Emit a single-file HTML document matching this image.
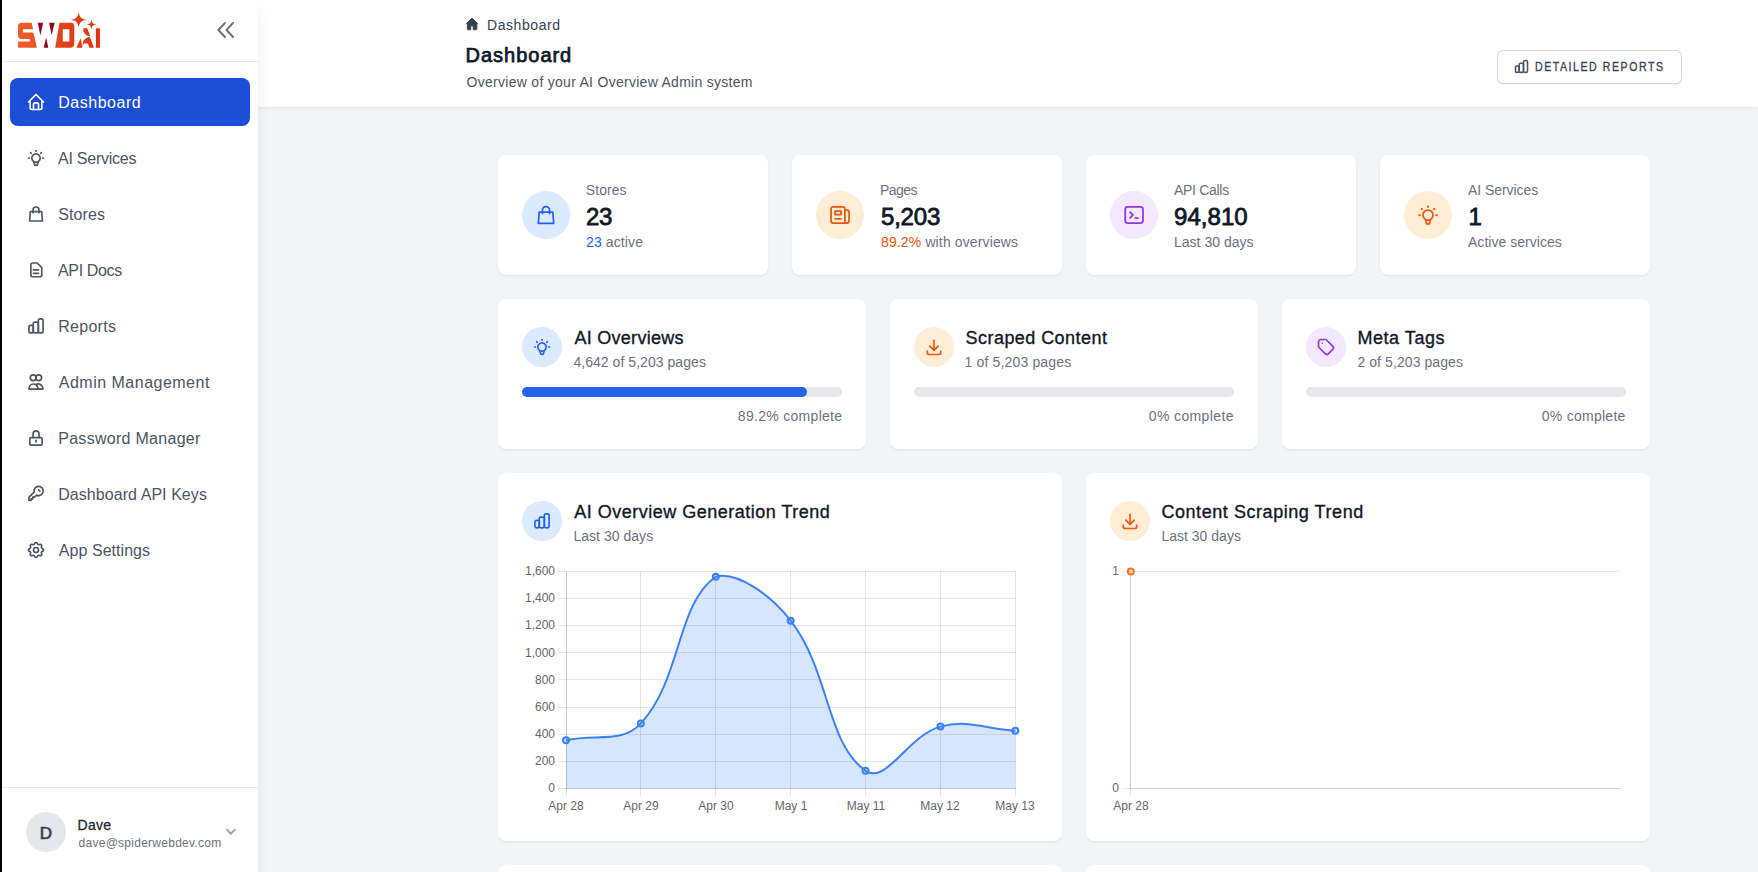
<!DOCTYPE html><html><head><meta charset="utf-8"><style>
*{box-sizing:border-box;margin:0;padding:0}
html,body{width:1758px;height:872px;overflow:hidden;background:#f3f4f6;font-family:"Liberation Sans",sans-serif}
.a{position:absolute;display:block}
.t{position:absolute;line-height:1;white-space:nowrap}
.card{position:absolute;background:#fff;border-radius:8px;box-shadow:0 1px 2px 0 rgba(0,0,0,.08)}
.circ{position:absolute;border-radius:50%}
</style></head><body>
<div class="a" style="left:258px;top:0;width:1500px;height:107px;background:#fff;box-shadow:0 1px 2px 0 rgba(0,0,0,.08)"></div>
<svg class="a" style="left:462px;top:14px;" width="20" height="20" viewBox="0 0 20 20" fill="none"><path d="M10 4.1L4.2 9.6H5.3V14.8Q5.3 15.8 6.3 15.8H8.8V11.9H11.2V15.8H13.9Q14.9 15.8 14.9 14.8V9.6H15.8Z" fill="#374151" stroke="#374151" stroke-width="0.8" stroke-linejoin="round"/></svg>
<div class="t" style="left:487px;top:18px;font-size:14px;color:#374151;letter-spacing:0.57px;">Dashboard</div>
<div class="t" style="left:465.6px;top:45px;font-size:20px;color:#111827;letter-spacing:0.975px;-webkit-text-stroke:0.75px #111827;">Dashboard</div>
<div class="t" style="left:466.6px;top:75px;font-size:14px;color:#4b5563;letter-spacing:0.28px;">Overview of your AI Overview Admin system</div>
<div class="a" style="left:1497px;top:50px;width:185px;height:34px;border:1px solid #d1d5db;border-radius:6px;background:#fff;box-shadow:0 1px 2px rgba(0,0,0,.05)"></div>
<svg class="a" style="left:1513px;top:58px" width="17" height="17" viewBox="0 0 24 24" fill="none"><g stroke="#4b5563" stroke-width="2.2" stroke-linecap="round" stroke-linejoin="round"><rect x="3.5" y="11.2" width="5.2" height="9.1" rx="2"/><rect x="8.7" y="7.3" width="6.1" height="13" rx="2"/><rect x="14.8" y="3.4" width="5.7" height="16.9" rx="2"/></g></svg>
<div class="t" style="left:1535.0px;top:61px;font-size:12px;color:#374151;letter-spacing:1.767px;-webkit-text-stroke:0.3px #374151;transform:scaleX(0.88);transform-origin:0 0;">DETAILED REPORTS</div>
<div class="a" style="left:0;top:0;width:258px;height:872px;background:#fff;box-shadow:0 10px 15px -3px rgba(0,0,0,.1),0 4px 6px -4px rgba(0,0,0,.1)"></div>
<div class="a" style="left:0;top:0;width:2px;height:872px;background:#000"></div>
<div class="a" style="left:2px;top:61px;width:256px;height:1px;background:#e5e7eb"></div>
<div class="a" style="left:2px;top:787px;width:256px;height:1px;background:#e5e7eb"></div>
<svg class="a" style="left:12px;top:8px;" width="96" height="44" viewBox="0 0 1758 806" fill="none">
<defs><linearGradient id="lg" gradientUnits="userSpaceOnUse" x1="110" y1="0" x2="1610" y2="0"><stop offset="0" stop-color="#f25d2b"/><stop offset="0.5" stop-color="#e2441a"/><stop offset="1" stop-color="#d9360f"/></linearGradient></defs>
<g fill="url(#lg)">
<path d="M170 270H360L385 390H200V450H370Q400 455 405 500L455 730H110V615H330L322 570H170Q110 565 110 510V330Q115 275 170 270Z"/>
<path d="M870 270H1080Q1140 275 1140 340V660Q1135 725 1070 730H790Z M930 390V615H1050V390Z" fill-rule="evenodd"/>
<path d="M1312 372H1378L1432 510Q1395 522 1360 495Q1300 450 1305 395Q1306 372 1312 372Z"/>
<path d="M1297 641Q1320 540 1423 527L1503 729H1415L1390 650H1314L1290 729Z"/>
<path d="M1255 557Q1275 600 1285 729H1179Z"/>
<path d="M1536 372H1611V729H1536Z"/>
<path d="M1221 74C1238.2 174.1 1263.9 199.8 1364.0 217.0C1263.9 234.2 1238.2 259.9 1221.0 360.0C1203.8 259.9 1178.1 234.2 1078.0 217.0C1178.1 199.8 1203.8 174.1 1221.0 74.0Z"/>
<path d="M1457 215C1467.3 275.2 1482.8 290.7 1543.0 301.0C1482.8 311.3 1467.3 326.8 1457.0 387.0C1446.7 326.8 1431.2 311.3 1371.0 301.0C1431.2 290.7 1446.7 275.2 1457.0 215.0Z"/>
</g>
<g fill="#8b0a1e">
<path d="M470 270H570L520 500Z"/>
<path d="M680 270H780L725 500Z"/>
<path d="M625 540L665 730H580Z"/>
</g></svg>
<svg class="a" style="left:210px;top:15px;" width="32" height="30" viewBox="0 0 32 30" fill="none"><g stroke="#6b7280" stroke-width="2" stroke-linecap="round" stroke-linejoin="round" fill="none"><path d="M15 7.9L8.4 15L15 22M23.1 7.9L16.5 15L23.1 22"/></g></svg>
<div class="a" style="left:10px;top:78px;width:240px;height:48px;background:#1d4ed8;border-radius:8px"></div>
<svg class="a" style="left:26px;top:92px" width="20" height="20" viewBox="0 0 24 24" fill="none"><g stroke="#ffffff" stroke-width="2" stroke-linecap="round" stroke-linejoin="round"><path d="M5 12l-2 0l9 -9l9 9l-2 0"/><path d="M5 12v7a2 2 0 0 0 2 2h10a2 2 0 0 0 2 -2v-7"/><path d="M9 21v-6a2 2 0 0 1 2 -2h2a2 2 0 0 1 2 2v6"/></g></svg>
<div class="t" style="left:58.2px;top:95px;font-size:16px;color:#ffffff;letter-spacing:0.525px;">Dashboard</div>
<svg class="a" style="left:26px;top:148px" width="20" height="20" viewBox="0 0 24 24" fill="none"><g stroke="#4b5563" stroke-width="2" stroke-linecap="round" stroke-linejoin="round"><path d="M3 12h1m8 -9v1m8 8h1m-15.4 -6.4l.7 .7m12.1 -.7l-.7 .7"/><path d="M9 16a5 5 0 1 1 6 0a3.5 3.5 0 0 0 -1 3a2 2 0 0 1 -4 0a3.5 3.5 0 0 0 -1 -3"/><path d="M9.7 17l4.6 0"/></g></svg>
<div class="t" style="left:58px;top:151px;font-size:16px;color:#4b5563;letter-spacing:-0.25px;">AI Services</div>
<svg class="a" style="left:26px;top:204px" width="20" height="20" viewBox="0 0 24 24" fill="none"><g stroke="#4b5563" stroke-width="2" stroke-linecap="round" stroke-linejoin="round"><path d="M5.2 9.2H18.8L19.7 20.4H4.3Z"/><path d="M8.4 10.6V7.2A3.6 3.6 0 0 1 15.6 7.2V10.6"/></g></svg>
<div class="t" style="left:58.2px;top:207px;font-size:16px;color:#4b5563;letter-spacing:0.09px;">Stores</div>
<svg class="a" style="left:26px;top:260px" width="20" height="20" viewBox="0 0 24 24" fill="none"><g stroke="#4b5563" stroke-width="2" stroke-linecap="round" stroke-linejoin="round"><path d="M7.8 3.64H13.4L18.9 9.1V18.1A2 2 0 0 1 16.9 20.1H7.8A2 2 0 0 1 5.8 18.1V5.64A2 2 0 0 1 7.8 3.64Z"/><path d="M8.9 11.9H15.1M8.9 16H15.1"/></g></svg>
<div class="t" style="left:58px;top:263px;font-size:16px;color:#4b5563;letter-spacing:-0.35px;">API Docs</div>
<svg class="a" style="left:26px;top:316px" width="20" height="20" viewBox="0 0 24 24" fill="none"><g stroke="#4b5563" stroke-width="2" stroke-linecap="round" stroke-linejoin="round"><rect x="3.5" y="11.2" width="5.2" height="9.1" rx="2"/><rect x="8.7" y="7.3" width="6.1" height="13" rx="2"/><rect x="14.8" y="3.4" width="5.7" height="16.9" rx="2"/></g></svg>
<div class="t" style="left:58.2px;top:319px;font-size:16px;color:#4b5563;letter-spacing:0.283px;">Reports</div>
<svg class="a" style="left:26px;top:372px" width="20" height="20" viewBox="0 0 24 24" fill="none"><g stroke="#4b5563" stroke-width="2" stroke-linecap="round" stroke-linejoin="round"><circle cx="8.6" cy="6.9" r="3.5"/><circle cx="15.2" cy="6.9" r="3.5"/><path d="M3.5 20.5A5.5 6.1 0 0 1 14.5 20.5Z"/><path d="M12.9 14.6A6 6.1 0 0 1 20.5 20.5H14.5"/></g></svg>
<div class="t" style="left:58.8px;top:375px;font-size:16px;color:#4b5563;letter-spacing:0.49px;">Admin Management</div>
<svg class="a" style="left:26px;top:428px" width="20" height="20" viewBox="0 0 24 24" fill="none"><g stroke="#4b5563" stroke-width="2" stroke-linecap="round" stroke-linejoin="round"><rect x="4.5" y="11.5" width="14.9" height="9.1" rx="1.8"/><path d="M8.46 11.5V7A3.6 3.6 0 0 1 15.66 7V11.5"/><path d="M11.9 14.9V16.7"/></g></svg>
<div class="t" style="left:58.2px;top:431px;font-size:16px;color:#4b5563;letter-spacing:0.29px;">Password Manager</div>
<svg class="a" style="left:26px;top:484px" width="20" height="20" viewBox="0 0 24 24" fill="none"><g stroke="#4b5563" stroke-width="2" stroke-linecap="round" stroke-linejoin="round"><path d="M9.79 9.83L3.48 16.14V19.56H6.24V17.76H8.16V15.84H10.08L12.79 13.4A5.52 5.52 0 1 0 9.79 9.83Z"/><path d="M15.1 7.1L16.8 8.7"/></g></svg>
<div class="t" style="left:58.2px;top:487px;font-size:16px;color:#4b5563;letter-spacing:0.062px;">Dashboard API Keys</div>
<svg class="a" style="left:26px;top:540px" width="20" height="20" viewBox="0 0 24 24" fill="none"><g stroke="#4b5563" stroke-width="2" stroke-linecap="round" stroke-linejoin="round"><path d="M10.325 4.317c.426 -1.756 2.924 -1.756 3.35 0a1.724 1.724 0 0 0 2.573 1.066c1.543 -.94 3.31 .826 2.37 2.37a1.724 1.724 0 0 0 1.065 2.572c1.756 .426 1.756 2.924 0 3.35a1.724 1.724 0 0 0 -1.066 2.573c.94 1.543 -.826 3.31 -2.37 2.37a1.724 1.724 0 0 0 -2.572 1.065c-.426 1.756 -2.924 1.756 -3.35 0a1.724 1.724 0 0 0 -2.573 -1.066c-1.543 .94 -3.31 -.826 -2.37 -2.37a1.724 1.724 0 0 0 -1.065 -2.572c-1.756 -.426 -1.756 -2.924 0 -3.35a1.724 1.724 0 0 0 1.066 -2.573c-.94 -1.543 .826 -3.31 2.37 -2.37c1 .608 2.296 .07 2.572 -1.065z"/><path d="M9 12a3 3 0 1 0 6 0a3 3 0 0 0 -6 0"/></g></svg>
<div class="t" style="left:58.8px;top:543px;font-size:16px;color:#4b5563;letter-spacing:0.05px;">App Settings</div>
<div class="circ" style="left:26px;top:812px;width:40px;height:40px;background:#e5e7eb"></div>
<div class="t" style="left:-154px;width:400px;top:825px;font-size:17px;color:#374151;text-align:center;-webkit-text-stroke:0.7px #374151;">D</div>
<div class="t" style="left:77.6px;top:818px;font-size:14px;color:#1f2937;letter-spacing:0.267px;-webkit-text-stroke:0.3px #1f2937;">Dave</div>
<div class="t" style="left:78.6px;top:837px;font-size:12px;color:#6b7280;letter-spacing:0.26px;">dave@spiderwebdev.com</div>
<svg class="a" style="left:218px;top:820px;" width="26" height="25" viewBox="0 0 26 25" fill="none"><path d="M8.9 9.7L12.9 13.75L17 9.7" stroke="#9ca3af" stroke-width="1.8" stroke-linecap="round" stroke-linejoin="round" fill="none"/></svg>
<div class="card" style="left:498px;top:155px;width:270px;height:120px"></div>
<div class="circ" style="left:522px;top:191px;width:48px;height:48px;background:#dbeafe"></div>
<svg class="a" style="left:534px;top:203px" width="24" height="24" viewBox="0 0 24 24" fill="none"><g stroke="#2563eb" stroke-width="1.75" stroke-linecap="round" stroke-linejoin="round"><path d="M5.2 9.2H18.8L19.7 20.4H4.3Z"/><path d="M8.4 10.6V7.2A3.6 3.6 0 0 1 15.6 7.2V10.6"/></g></svg>
<div class="t" style="left:585.8px;top:183px;font-size:14px;color:#6b7280;letter-spacing:0.07px;">Stores</div>
<div class="t" style="left:586px;top:205px;font-size:24px;color:#111827;letter-spacing:-0.3px;-webkit-text-stroke:0.8px #111827;">23</div>
<div class="t" style="left:586px;top:235px;font-size:14px;color:#6b7280;letter-spacing:0.12px;"><span style="color:#2563eb">23</span> active</div>
<div class="card" style="left:792px;top:155px;width:270px;height:120px"></div>
<div class="circ" style="left:816px;top:191px;width:48px;height:48px;background:#ffedd5"></div>
<svg class="a" style="left:828px;top:203px" width="24" height="24" viewBox="0 0 24 24" fill="none"><g stroke="#ea580c" stroke-width="1.75" stroke-linecap="round" stroke-linejoin="round"><path d="M5.1 3.8H14.9A2 2 0 0 1 16.9 5.8V20H5.1A2 2 0 0 1 3.1 18V5.8A2 2 0 0 1 5.1 3.8Z"/><path d="M16.9 7H19A2 2 0 0 1 21 9V18A2 2 0 0 1 19 20H16.9"/><rect x="7" y="8.2" width="6" height="3.3"/><path d="M7.1 15.8H13"/></g></svg>
<div class="t" style="left:880.0px;top:183px;font-size:14px;color:#6b7280;letter-spacing:-0.55px;">Pages</div>
<div class="t" style="left:881.0px;top:205px;font-size:24px;color:#111827;letter-spacing:-0.2px;-webkit-text-stroke:0.8px #111827;">5,203</div>
<div class="t" style="left:881.0px;top:235px;font-size:14px;color:#6b7280;letter-spacing:0.131px;"><span style="color:#ea580c">89.2%</span> with overviews</div>
<div class="card" style="left:1086px;top:155px;width:270px;height:120px"></div>
<div class="circ" style="left:1110px;top:191px;width:48px;height:48px;background:#f3e8ff"></div>
<svg class="a" style="left:1122px;top:203px" width="24" height="24" viewBox="0 0 24 24" fill="none"><g stroke="#9333ea" stroke-width="1.75" stroke-linecap="round" stroke-linejoin="round"><rect x="3.2" y="3.8" width="17.8" height="16.2" rx="2.5"/><path d="M8.1 9.1L10.9 11.95L8.1 14.8"/><path d="M13.4 15H16"/></g></svg>
<div class="t" style="left:1174px;top:183px;font-size:14px;color:#6b7280;letter-spacing:-0.3px;">API Calls</div>
<div class="t" style="left:1174.0px;top:205px;font-size:24px;color:#111827;letter-spacing:0.06px;-webkit-text-stroke:0.8px #111827;">94,810</div>
<div class="t" style="left:1174.0px;top:235px;font-size:14px;color:#6b7280;letter-spacing:0.011px;">Last 30 days</div>
<div class="card" style="left:1380px;top:155px;width:270px;height:120px"></div>
<div class="circ" style="left:1404px;top:191px;width:48px;height:48px;background:#ffedd5"></div>
<svg class="a" style="left:1416px;top:203px" width="24" height="24" viewBox="0 0 24 24" fill="none"><g stroke="#ea580c" stroke-width="1.75" stroke-linecap="round" stroke-linejoin="round"><path d="M3 12h1m8 -9v1m8 8h1m-15.4 -6.4l.7 .7m12.1 -.7l-.7 .7"/><path d="M9 16a5 5 0 1 1 6 0a3.5 3.5 0 0 0 -1 3a2 2 0 0 1 -4 0a3.5 3.5 0 0 0 -1 -3"/><path d="M9.7 17l4.6 0"/></g></svg>
<div class="t" style="left:1468px;top:183px;font-size:14px;color:#6b7280;letter-spacing:-0.05px;">AI Services</div>
<div class="t" style="left:1468.6px;top:205px;font-size:24px;color:#111827;-webkit-text-stroke:0.8px #111827;">1</div>
<div class="t" style="left:1468px;top:235px;font-size:14px;color:#6b7280;letter-spacing:0.034px;">Active services</div>
<div class="card" style="left:498px;top:299px;width:368px;height:150px"></div>
<div class="circ" style="left:522px;top:327px;width:40px;height:40px;background:#dbeafe"></div>
<svg class="a" style="left:532px;top:337px" width="20" height="20" viewBox="0 0 24 24" fill="none"><g stroke="#2563eb" stroke-width="2" stroke-linecap="round" stroke-linejoin="round"><path d="M3 12h1m8 -9v1m8 8h1m-15.4 -6.4l.7 .7m12.1 -.7l-.7 .7"/><path d="M9 16a5 5 0 1 1 6 0a3.5 3.5 0 0 0 -1 3a2 2 0 0 1 -4 0a3.5 3.5 0 0 0 -1 -3"/><path d="M9.7 17l4.6 0"/></g></svg>
<div class="t" style="left:574.4px;top:329px;font-size:18px;color:#111827;letter-spacing:0.282px;-webkit-text-stroke:0.35px #111827;">AI Overviews</div>
<div class="t" style="left:573.4px;top:355px;font-size:14px;color:#6b7280;letter-spacing:0.049px;">4,642 of 5,203 pages</div>
<div class="a" style="left:522px;top:387px;width:320px;height:10px;border-radius:5px;background:#e5e7eb"></div>
<div class="a" style="left:522px;top:387px;width:285.4px;height:10px;border-radius:5px;background:#2563eb"></div>
<div class="t" style="right:915.6px;top:409px;font-size:14px;color:#6b7280;text-align:right;letter-spacing:0.298px;">89.2% complete</div>
<div class="card" style="left:890px;top:299px;width:368px;height:150px"></div>
<div class="circ" style="left:914px;top:327px;width:40px;height:40px;background:#ffedd5"></div>
<svg class="a" style="left:924px;top:337px" width="20" height="20" viewBox="0 0 24 24" fill="none"><g stroke="#ea580c" stroke-width="2" stroke-linecap="round" stroke-linejoin="round"><path d="M4 17v2a2 2 0 0 0 2 2h12a2 2 0 0 0 2 -2v-2"/><path d="M7 11l5 5l5 -5"/><path d="M12 4l0 12"/></g></svg>
<div class="t" style="left:965.6px;top:329px;font-size:18px;color:#111827;letter-spacing:0.443px;-webkit-text-stroke:0.35px #111827;">Scraped Content</div>
<div class="t" style="left:964.6px;top:355px;font-size:14px;color:#6b7280;letter-spacing:0.15px;">1 of 5,203 pages</div>
<div class="a" style="left:914px;top:387px;width:320px;height:10px;border-radius:5px;background:#e5e7eb"></div>
<div class="t" style="right:524.2px;top:409px;font-size:14px;color:#6b7280;text-align:right;letter-spacing:0.37px;">0% complete</div>
<div class="card" style="left:1282px;top:299px;width:368px;height:150px"></div>
<div class="circ" style="left:1306px;top:327px;width:40px;height:40px;background:#f3e8ff"></div>
<svg class="a" style="left:1316px;top:337px" width="20" height="20" viewBox="0 0 24 24" fill="none"><g stroke="#9333ea" stroke-width="2" stroke-linecap="round" stroke-linejoin="round"><path d="M7.5 7.5h.01"/><path d="M3 6v5.172a2 2 0 0 0 .586 1.414l7.71 7.71a2.41 2.41 0 0 0 3.408 0l5.592 -5.592a2.41 2.41 0 0 0 0 -3.408l-7.71 -7.71a2 2 0 0 0 -1.414 -.586h-5.172a3 3 0 0 0 -3 3z"/></g></svg>
<div class="t" style="left:1357.4px;top:329px;font-size:18px;color:#111827;letter-spacing:0.55px;-webkit-text-stroke:0.35px #111827;">Meta Tags</div>
<div class="t" style="left:1357.4px;top:355px;font-size:14px;color:#6b7280;letter-spacing:0.083px;">2 of 5,203 pages</div>
<div class="a" style="left:1306px;top:387px;width:320px;height:10px;border-radius:5px;background:#e5e7eb"></div>
<div class="t" style="right:132.4000000000001px;top:409px;font-size:14px;color:#6b7280;text-align:right;letter-spacing:0.27px;">0% complete</div>
<div class="card" style="left:498px;top:473px;width:564px;height:368px"></div>
<div class="circ" style="left:522px;top:501px;width:40px;height:40px;background:#dbeafe"></div>
<svg class="a" style="left:532px;top:511px" width="20" height="20" viewBox="0 0 24 24" fill="none"><g stroke="#2563eb" stroke-width="2" stroke-linecap="round" stroke-linejoin="round"><rect x="3.5" y="11.2" width="5.2" height="9.1" rx="2"/><rect x="8.7" y="7.3" width="6.1" height="13" rx="2"/><rect x="14.8" y="3.4" width="5.7" height="16.9" rx="2"/></g></svg>
<div class="t" style="left:574.2px;top:503px;font-size:18px;color:#111827;letter-spacing:0.5px;-webkit-text-stroke:0.35px #111827;">AI Overview Generation Trend</div>
<div class="t" style="left:573.4px;top:529px;font-size:14px;color:#6b7280;letter-spacing:0.032px;">Last 30 days</div>
<div class="card" style="left:1086px;top:473px;width:564px;height:368px"></div>
<div class="circ" style="left:1110px;top:501px;width:40px;height:40px;background:#ffedd5"></div>
<svg class="a" style="left:1120px;top:511px" width="20" height="20" viewBox="0 0 24 24" fill="none"><g stroke="#ea580c" stroke-width="2" stroke-linecap="round" stroke-linejoin="round"><path d="M4 17v2a2 2 0 0 0 2 2h12a2 2 0 0 0 2 -2v-2"/><path d="M7 11l5 5l5 -5"/><path d="M12 4l0 12"/></g></svg>
<div class="t" style="left:1161.4px;top:503px;font-size:18px;color:#111827;letter-spacing:0.557px;-webkit-text-stroke:0.35px #111827;">Content Scraping Trend</div>
<div class="t" style="left:1161.4px;top:529px;font-size:14px;color:#6b7280;letter-spacing:0.014px;">Last 30 days</div>
<svg class="a" style="left:0px;top:0px;pointer-events:none" width="1758" height="872" viewBox="0 0 1758 872" fill="none"><line x1="558" y1="571.5" x2="1015.8" y2="571.5" stroke="rgba(0,0,0,0.1)" stroke-width="1"/><line x1="558" y1="598.5" x2="1015.8" y2="598.5" stroke="rgba(0,0,0,0.1)" stroke-width="1"/><line x1="558" y1="625.5" x2="1015.8" y2="625.5" stroke="rgba(0,0,0,0.1)" stroke-width="1"/><line x1="558" y1="652.5" x2="1015.8" y2="652.5" stroke="rgba(0,0,0,0.1)" stroke-width="1"/><line x1="558" y1="679.5" x2="1015.8" y2="679.5" stroke="rgba(0,0,0,0.1)" stroke-width="1"/><line x1="558" y1="707.5" x2="1015.8" y2="707.5" stroke="rgba(0,0,0,0.1)" stroke-width="1"/><line x1="558" y1="734.5" x2="1015.8" y2="734.5" stroke="rgba(0,0,0,0.1)" stroke-width="1"/><line x1="558" y1="761.5" x2="1015.8" y2="761.5" stroke="rgba(0,0,0,0.1)" stroke-width="1"/><line x1="558" y1="788.5" x2="1015.8" y2="788.5" stroke="rgba(0,0,0,0.1)" stroke-width="1"/><line x1="566.5" y1="571.2" x2="566.5" y2="796.5" stroke="rgba(0,0,0,0.1)" stroke-width="1"/><line x1="640.5" y1="571.2" x2="640.5" y2="796.5" stroke="rgba(0,0,0,0.1)" stroke-width="1"/><line x1="715.5" y1="571.2" x2="715.5" y2="796.5" stroke="rgba(0,0,0,0.1)" stroke-width="1"/><line x1="790.5" y1="571.2" x2="790.5" y2="796.5" stroke="rgba(0,0,0,0.1)" stroke-width="1"/><line x1="865.5" y1="571.2" x2="865.5" y2="796.5" stroke="rgba(0,0,0,0.1)" stroke-width="1"/><line x1="940.5" y1="571.2" x2="940.5" y2="796.5" stroke="rgba(0,0,0,0.1)" stroke-width="1"/><line x1="1015.5" y1="571.2" x2="1015.5" y2="796.5" stroke="rgba(0,0,0,0.1)" stroke-width="1"/><line x1="566.5" y1="571.2" x2="566.5" y2="789.1" stroke="rgba(0,0,0,0.1)" stroke-width="1"/><line x1="566" y1="788.5" x2="1015.8" y2="788.5" stroke="rgba(0,0,0,0.1)" stroke-width="1"/><path d="M566.00 740.20C595.95 733.48 621.84 744.19 640.88 723.40C681.75 678.79 676.54 603.60 715.77 576.70C736.45 571.20 770.21 594.21 790.65 620.70C830.12 671.85 826.08 742.90 865.53 770.80C885.99 785.26 908.25 735.21 940.42 726.60C968.16 719.17 985.35 729.06 1015.30 730.70L1015.3 788.6L566.0 788.6Z" fill="rgba(59,130,246,0.2)"/><path d="M566.00 740.20C595.95 733.48 621.84 744.19 640.88 723.40C681.75 678.79 676.54 603.60 715.77 576.70C736.45 571.20 770.21 594.21 790.65 620.70C830.12 671.85 826.08 742.90 865.53 770.80C885.99 785.26 908.25 735.21 940.42 726.60C968.16 719.17 985.35 729.06 1015.30 730.70" stroke="rgb(59,130,246)" stroke-width="2" fill="none"/><circle cx="566.00" cy="740.20" r="3" fill="rgba(59,130,246,0.2)" stroke="rgb(59,130,246)" stroke-width="2"/><circle cx="640.88" cy="723.40" r="3" fill="rgba(59,130,246,0.2)" stroke="rgb(59,130,246)" stroke-width="2"/><circle cx="715.77" cy="576.70" r="3" fill="rgba(59,130,246,0.2)" stroke="rgb(59,130,246)" stroke-width="2"/><circle cx="790.65" cy="620.70" r="3" fill="rgba(59,130,246,0.2)" stroke="rgb(59,130,246)" stroke-width="2"/><circle cx="865.53" cy="770.80" r="3" fill="rgba(59,130,246,0.2)" stroke="rgb(59,130,246)" stroke-width="2"/><circle cx="940.42" cy="726.60" r="3" fill="rgba(59,130,246,0.2)" stroke="rgb(59,130,246)" stroke-width="2"/><circle cx="1015.30" cy="730.70" r="3" fill="rgba(59,130,246,0.2)" stroke="rgb(59,130,246)" stroke-width="2"/></svg>
<div class="t" style="right:1203px;top:565px;font-size:12px;color:#666666;text-align:right;">1,600</div>
<div class="t" style="right:1203px;top:592px;font-size:12px;color:#666666;text-align:right;">1,400</div>
<div class="t" style="right:1203px;top:619px;font-size:12px;color:#666666;text-align:right;">1,200</div>
<div class="t" style="right:1203px;top:647px;font-size:12px;color:#666666;text-align:right;">1,000</div>
<div class="t" style="right:1203px;top:674px;font-size:12px;color:#666666;text-align:right;">800</div>
<div class="t" style="right:1203px;top:701px;font-size:12px;color:#666666;text-align:right;">600</div>
<div class="t" style="right:1203px;top:728px;font-size:12px;color:#666666;text-align:right;">400</div>
<div class="t" style="right:1203px;top:755px;font-size:12px;color:#666666;text-align:right;">200</div>
<div class="t" style="right:1203px;top:782px;font-size:12px;color:#666666;text-align:right;">0</div>
<div class="t" style="left:366px;width:400px;top:800px;font-size:12px;color:#666666;text-align:center;">Apr 28</div>
<div class="t" style="left:441px;width:400px;top:800px;font-size:12px;color:#666666;text-align:center;">Apr 29</div>
<div class="t" style="left:516px;width:400px;top:800px;font-size:12px;color:#666666;text-align:center;">Apr 30</div>
<div class="t" style="left:591px;width:400px;top:800px;font-size:12px;color:#666666;text-align:center;">May 1</div>
<div class="t" style="left:666px;width:400px;top:800px;font-size:12px;color:#666666;text-align:center;">May 11</div>
<div class="t" style="left:740px;width:400px;top:800px;font-size:12px;color:#666666;text-align:center;">May 12</div>
<div class="t" style="left:815px;width:400px;top:800px;font-size:12px;color:#666666;text-align:center;">May 13</div>
<svg class="a" style="left:0px;top:0px;pointer-events:none" width="1758" height="872" viewBox="0 0 1758 872" fill="none"><line x1="1123" y1="571.5" x2="1620" y2="571.5" stroke="rgba(0,0,0,0.1)" stroke-width="1"/><line x1="1123" y1="788.5" x2="1620" y2="788.5" stroke="rgba(0,0,0,0.1)" stroke-width="1"/><line x1="1130" y1="788.5" x2="1620" y2="788.5" stroke="rgba(0,0,0,0.1)" stroke-width="1"/><line x1="1130.5" y1="571" x2="1130.5" y2="796.5" stroke="rgba(0,0,0,0.1)" stroke-width="1"/><line x1="1130.5" y1="571" x2="1130.5" y2="788.5" stroke="rgba(0,0,0,0.1)" stroke-width="1"/><circle cx="1130.8" cy="571.4" r="3" fill="rgba(249,115,22,0.2)" stroke="rgb(249,115,22)" stroke-width="2"/></svg>
<div class="t" style="right:639px;top:565px;font-size:12px;color:#666666;text-align:right;">1</div>
<div class="t" style="right:639px;top:782px;font-size:12px;color:#666666;text-align:right;">0</div>
<div class="t" style="left:931px;width:400px;top:800px;font-size:12px;color:#666666;text-align:center;">Apr 28</div>
<div class="card" style="left:498px;top:865px;width:564px;height:300px"></div>
<div class="card" style="left:1086px;top:865px;width:564px;height:300px"></div>
</body></html>
